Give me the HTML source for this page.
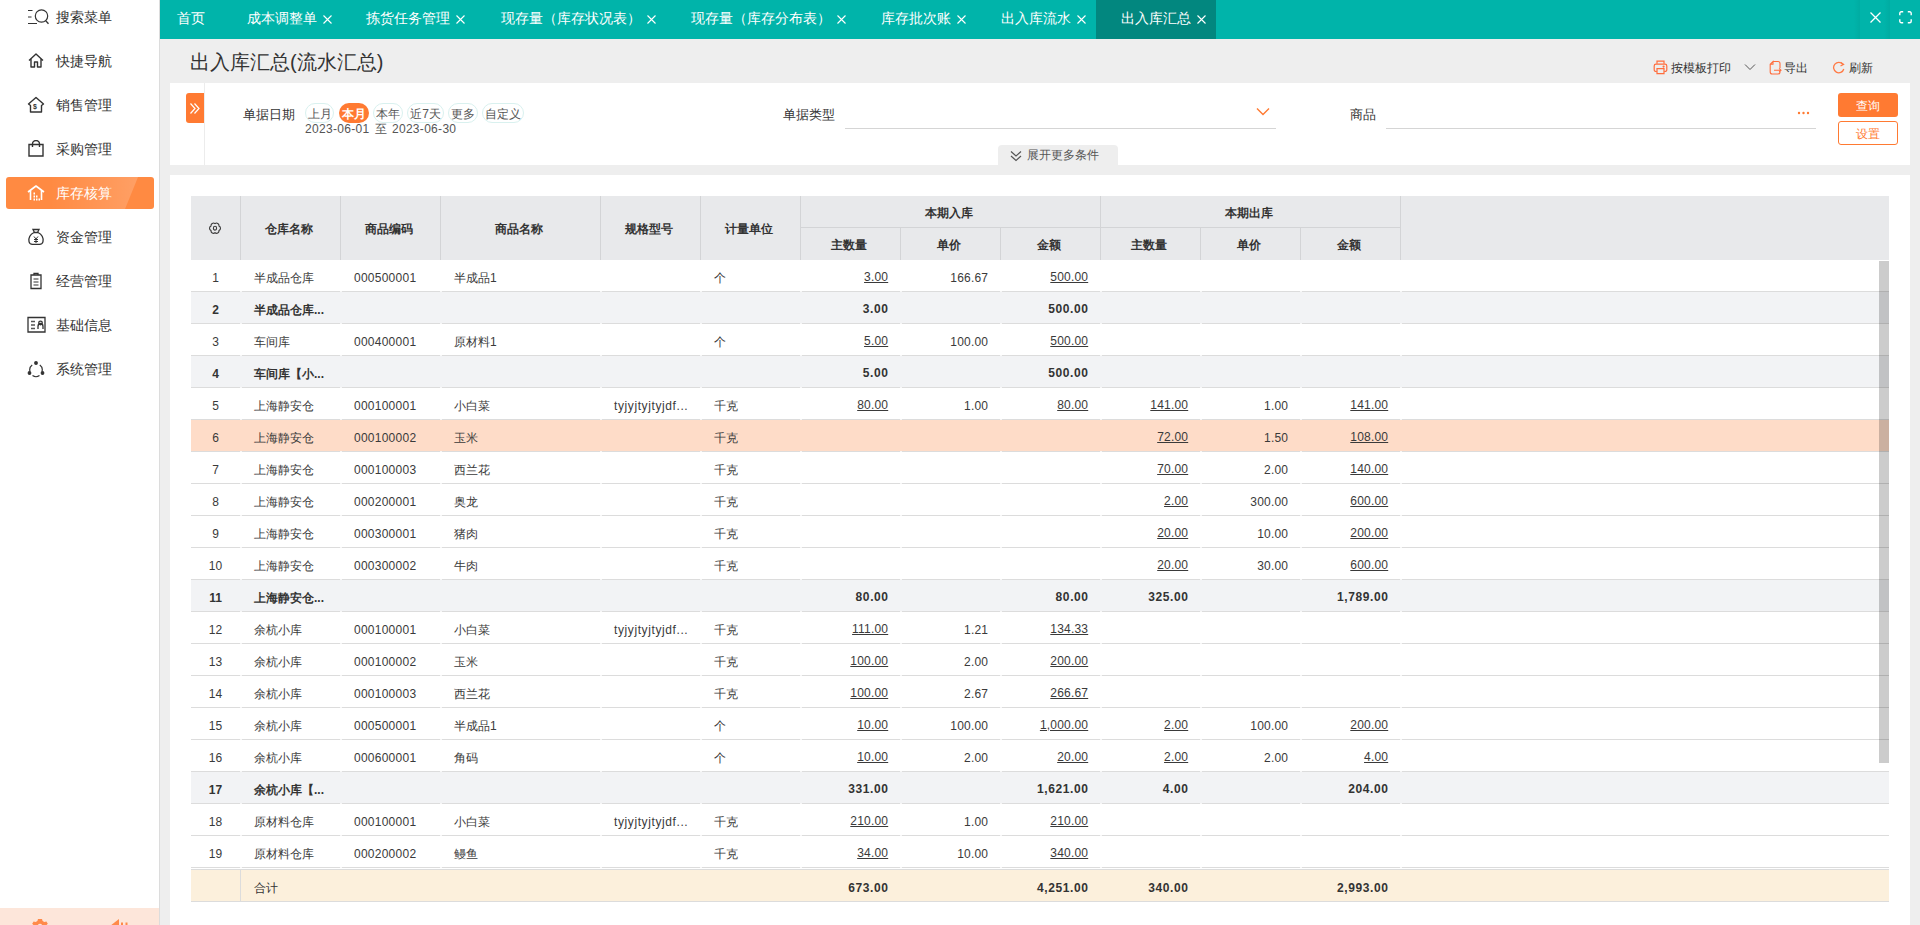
<!DOCTYPE html><html><head><meta charset="utf-8"><style>
*{box-sizing:border-box;margin:0;padding:0}
html,body{width:1920px;height:925px;overflow:hidden}
body{position:relative;background:#eeeeee;font-family:"Liberation Sans",sans-serif;color:#333;font-size:12px}
.a{position:absolute;white-space:nowrap}
.side{position:absolute;left:0;top:0;width:160px;height:925px;background:#fff;border-right:1px solid #dcdcdc}
.mi{position:absolute;left:0;width:159px;height:32px;font-size:14px;line-height:32px;color:#333}
.mi span{position:absolute;left:56px;top:0}
.mi svg{position:absolute;left:26px;top:7px}
.side > svg.a{position:absolute}
.tabs{position:absolute;left:160px;top:0;width:1760px;height:39px;background:#00b4aa}
.tt{position:absolute;top:0;height:39px;line-height:37px;font-size:14px;color:#fff;white-space:nowrap}
.cell{position:absolute;height:31px;line-height:31px;white-space:nowrap}
.hd{position:absolute;background:#e8e9eb;font-weight:bold;color:#333;text-align:center}
.num{text-align:right;padding-right:12px}
.u{text-decoration:underline;text-underline-offset:1px;margin-top:-1px}
</style></head><body>

<div class="side">
<div class="mi" style="top:1px;"><svg width="24" height="18" viewBox="0 0 24 18" fill="none" stroke="#333" stroke-width="1.2"><path d="M2 2.5h4.5M2 9h3.5M2 15.5h9"/><circle cx="15.5" cy="8" r="6.2"/><path d="M19.6 12.6l2.9 3.2" stroke-width="1.4"/></svg><span>搜索菜单</span></div>
<div class="mi" style="top:45px;"><svg width="20" height="18" viewBox="0 0 20 18" fill="none" stroke="#333" stroke-width="1.4" stroke-linejoin="round"><path d="M3 8.5L10 2l7 6.5M5 7v8h3.5v-5h3v5H15V7"/></svg><span>快捷导航</span></div>
<div class="mi" style="top:89px;"><svg width="20" height="18" viewBox="0 0 20 18" fill="none" stroke="#333" stroke-width="1.4" stroke-linejoin="round"><path d="M2.5 8L10 1.5 17.5 8 15.5 9.5V16h-11V9.5z"/><text x="7" y="12.5" font-size="7" font-family="Liberation Sans" font-weight="bold" fill="#333" stroke="none">$</text></svg><span>销售管理</span></div>
<div class="mi" style="top:133px;"><svg width="20" height="18" viewBox="0 0 20 18" fill="none" stroke="#333" stroke-width="1.4"><path d="M3 4.5h14V16H3z"/><path d="M6.5 7V4a3.5 3.5 0 0 1 7 0v3"/></svg><span>采购管理</span></div>
<div class="mi" style="top:177px;left:6px;width:148px;border-radius:3px;background:#ff8a42;color:#fff;overflow:hidden;"><div style="position:absolute;left:0;top:0;width:148px;height:32px;clip-path:polygon(0 0,132px 0,119px 32px,0 32px);background:linear-gradient(to right,rgba(255,255,255,0) 30%,rgba(255,255,255,0.22) 100%)"></div><span style="left:50px">库存核算</span></div>
<svg class="a" style="left:26px;top:184px" width="20" height="18" viewBox="0 0 20 18" fill="none" stroke="#fff" stroke-width="1.6" stroke-linejoin="round"><path d="M2 8L10 2l8 6M4.5 6.5V16M15.5 6.5V16"/><path d="M7.5 9.5h1.5M7.5 12.5h1.5M10 12.5h1.5M7.5 15.5h1.5M10 15.5h1.5M12.5 15.5h1.5" stroke-width="1.8"/></svg>
<div class="mi" style="top:221px;"><svg width="20" height="18" viewBox="0 0 20 18" fill="none" stroke="#333" stroke-width="1.3"><path d="M7 1.5h6l-1.5 3h-3z"/><path d="M8 4.5C4 6.5 2.5 10 3 13.5c.3 1.8 1.5 2.8 3.5 2.8h7c2 0 3.2-1 3.5-2.8.5-3.5-1-7-5-9"/><path d="M8 8.5l2 2.5 2-2.5M10 11v4M8 11.5h4M8 13.5h4" stroke-width="1"/></svg><span>资金管理</span></div>
<div class="mi" style="top:265px;"><svg width="20" height="18" viewBox="0 0 20 18" fill="none" stroke="#333" stroke-width="1.3"><path d="M5 3h10v13.5H5z"/><path d="M8 3V1.5h4V3"/><path d="M7.5 7h5M7.5 10h5M7.5 13h5" stroke="#777"/></svg><span>经营管理</span></div>
<div class="mi" style="top:309px;"><svg width="20" height="18" viewBox="0 0 20 18" fill="none" stroke="#333" stroke-width="1.3"><path d="M2 1.5h17v14.5H2z"/><path d="M5 5.5h4M5 9h4M5 12.5h4" stroke="#555"/><path d="M12 13V10.5a2.5 3 0 0 1 5 0V13M14.5 8.8a1.8 1.8 0 1 0 0-3.6 1.8 1.8 0 0 0 0 3.6z"/></svg><span>基础信息</span></div>
<div class="mi" style="top:353px;"><svg width="20" height="18" viewBox="0 0 20 18" fill="none" stroke="#333" stroke-width="1.2"><path d="M6.2 5A6 6 0 0 0 4 11.5M13.8 5A6 6 0 0 1 16 11.5M6.5 15.5a6 6 0 0 0 7 0"/><circle cx="10" cy="3" r="1.3" fill="#333"/><circle cx="3.5" cy="13" r="1.3" fill="#333"/><circle cx="16.5" cy="13" r="1.3" fill="#333"/></svg><span>系统管理</span></div>
<div class="a" style="left:0;top:908px;width:159px;height:17px;background:#fde6da"></div>
<svg class="a" style="left:32px;top:918px" width="16" height="8"><path d="M6 1h4l.6 2 1.8 1 2-.6 1.4 2.4-1.5 1.5v1.5H1.7V7.3L.2 5.8l1.4-2.4 2 .6 1.8-1z" fill="#ff8a4a"/><circle cx="8" cy="8" r="2.2" fill="#fde6da"/></svg>
<svg class="a" style="left:110px;top:918px" width="20" height="8"><path d="M0 8L9 1v7z" fill="#ff8a4a"/><path d="M12 4.5v4M16.5 4.5v4" stroke="#ff8a4a" stroke-width="2"/></svg>
</div>
<div class="tabs"></div>
<div class="a" style="left:1096px;top:0;width:120px;height:39px;background:#02877f"></div>
<div class="tt" style="left:177px">首页</div>
<div class="tt" style="left:247px">成本调整单</div>
<svg class="a" style="left:323px;top:15px" width="9" height="9"><path d="M0.5 0.5L8.5 8.5M8.5 0.5L0.5 8.5" stroke="#fff" stroke-width="1.1"/></svg>
<div class="tt" style="left:366px">拣货任务管理</div>
<svg class="a" style="left:456px;top:15px" width="9" height="9"><path d="M0.5 0.5L8.5 8.5M8.5 0.5L0.5 8.5" stroke="#fff" stroke-width="1.1"/></svg>
<div class="tt" style="left:501px">现存量（库存状况表）</div>
<svg class="a" style="left:647px;top:15px" width="9" height="9"><path d="M0.5 0.5L8.5 8.5M8.5 0.5L0.5 8.5" stroke="#fff" stroke-width="1.1"/></svg>
<div class="tt" style="left:691px">现存量（库存分布表）</div>
<svg class="a" style="left:837px;top:15px" width="9" height="9"><path d="M0.5 0.5L8.5 8.5M8.5 0.5L0.5 8.5" stroke="#fff" stroke-width="1.1"/></svg>
<div class="tt" style="left:881px">库存批次账</div>
<svg class="a" style="left:957px;top:15px" width="9" height="9"><path d="M0.5 0.5L8.5 8.5M8.5 0.5L0.5 8.5" stroke="#fff" stroke-width="1.1"/></svg>
<div class="tt" style="left:1001px">出入库流水</div>
<svg class="a" style="left:1077px;top:15px" width="9" height="9"><path d="M0.5 0.5L8.5 8.5M8.5 0.5L0.5 8.5" stroke="#fff" stroke-width="1.1"/></svg>
<div class="tt" style="left:1121px">出入库汇总</div>
<svg class="a" style="left:1197px;top:15px" width="9" height="9"><path d="M0.5 0.5L8.5 8.5M8.5 0.5L0.5 8.5" stroke="#fff" stroke-width="1.1"/></svg>
<div class="a" style="left:1854px;top:0;width:6px;height:39px;background:linear-gradient(to right,rgba(0,120,110,0),rgba(0,120,110,0.13))"></div>
<div class="a" style="left:1884px;top:0;width:6px;height:39px;background:linear-gradient(to right,rgba(0,120,110,0),rgba(0,120,110,0.13))"></div>
<svg class="a" style="left:1870px;top:12px" width="11" height="11"><path d="M0.5 0.5L10.5 10.5M10.5 0.5L0.5 10.5" stroke="#fff" stroke-width="1.3"/></svg>
<svg class="a" style="left:1899px;top:11px" width="13" height="13" fill="none" stroke="#fff" stroke-width="1.4"><path d="M.8 4.2V2.3A1.5 1.5 0 0 1 2.3.8h1.9M8.8.8h1.9a1.5 1.5 0 0 1 1.5 1.5v1.9M12.2 8.3v1.9a1.5 1.5 0 0 1-1.5 1.5H8.8M4.2 11.7H2.3A1.5 1.5 0 0 1 .8 10.2V8.3"/></svg>
<div class="a" style="left:190px;top:48px;font-size:20px;line-height:28px;color:#333">出入库汇总(流水汇总)</div>
<svg class="a" style="left:1653px;top:60px" width="15" height="15" fill="none" stroke="#ff6d3d" stroke-width="1.2"><path d="M4 3.8V1.2h7v2.6"/><path d="M3.8 11.5H3A1.8 1.8 0 0 1 1.2 9.7V6A1.8 1.8 0 0 1 3 4.2h9A1.8 1.8 0 0 1 13.8 6v3.7A1.8 1.8 0 0 1 12 11.5h-.8"/><path d="M4 8.6h7v5H4z"/><circle cx="10.6" cy="6.6" r=".5" fill="#ff6d3d"/></svg>
<div class="a" style="left:1671px;top:60px;line-height:16px;font-size:12px;color:#333">按模板打印</div>
<svg class="a" style="left:1744px;top:63px" width="12" height="8" fill="none" stroke="#555" stroke-width="1"><path d="M1 1.5l5 5 5-5"/></svg>
<svg class="a" style="left:1769px;top:60px" width="14" height="15" fill="none" stroke="#ff6d3d" stroke-width="1.1"><path d="M4 1.5h5a2 2 0 0 1 2 2V8M11 11.8v.2a2 2 0 0 1-2 2H3.2a2 2 0 0 1-2-2V4.3L4 1.5v2.8H1.2"/><path d="M5 10.2h7M10.2 8.4l1.8 1.8-1.8 1.8"/></svg>
<div class="a" style="left:1784px;top:60px;line-height:16px;font-size:12px;color:#333">导出</div>
<svg class="a" style="left:1832px;top:61px" width="13" height="13" fill="none" stroke="#ff7a45" stroke-width="1.3"><path d="M11 3.5A5.2 5.2 0 1 0 11.8 8"/><path d="M8.5 1.2l3 2.3-3 1.5" /></svg>
<div class="a" style="left:1849px;top:60px;line-height:16px;font-size:12px;color:#333">刷新</div>
<div class="a" style="left:170px;top:83px;width:1740px;height:82px;background:#fff"></div>
<div class="a" style="left:204px;top:83px;width:1px;height:82px;background:#ececec"></div>
<div class="a" style="left:186px;top:93px;width:18px;height:30px;background:#ff7a32;border-radius:3px 0 0 3px"></div>
<svg class="a" style="left:189px;top:102px" width="13" height="13" fill="none" stroke="#fff" stroke-width="1.2"><path d="M1.5 1.5l4.5 5-4.5 5M5.5 1.5l4.5 5-4.5 5"/></svg>
<div class="a" style="left:243px;top:105px;line-height:20px;font-size:13px;color:#333">单据日期</div>
<div class="a" style="left:305px;top:103px;width:29px;height:20px;border-radius:10px;border:1px solid #d9f1ef;color:#555;text-align:center;line-height:20px;font-size:12px">上月</div>
<div class="a" style="left:339px;top:103px;width:30px;height:20px;border-radius:10px;background:#ff7a32;color:#fff;text-align:center;line-height:22px;font-size:12px;font-weight:bold">本月</div>
<div class="a" style="left:373px;top:103px;width:30px;height:20px;border-radius:10px;border:1px solid #d9f1ef;color:#555;text-align:center;line-height:20px;font-size:12px">本年</div>
<div class="a" style="left:407px;top:103px;width:37px;height:20px;border-radius:10px;border:1px solid #d9f1ef;color:#555;text-align:center;line-height:20px;font-size:12px">近7天</div>
<div class="a" style="left:448px;top:103px;width:30px;height:20px;border-radius:10px;border:1px solid #d9f1ef;color:#555;text-align:center;line-height:20px;font-size:12px">更多</div>
<div class="a" style="left:482px;top:103px;width:42px;height:20px;border-radius:10px;border:1px solid #d9f1ef;color:#555;text-align:center;line-height:20px;font-size:12px">自定义</div>
<div class="a" style="left:305px;top:121px;line-height:16px;font-size:12px;color:#555;letter-spacing:0.3px;word-spacing:1.5px">2023-06-01 至 2023-06-30</div>
<div class="a" style="left:783px;top:105px;line-height:20px;font-size:13px;color:#333">单据类型</div>
<div class="a" style="left:845px;top:128px;width:431px;height:1px;background:#d5d5d5"></div>
<svg class="a" style="left:1256px;top:107px" width="14" height="9" fill="none" stroke="#ff7a32" stroke-width="1.4"><path d="M1 1.5l6 6 6-6"/></svg>
<div class="a" style="left:1350px;top:105px;line-height:20px;font-size:13px;color:#333">商品</div>
<div class="a" style="left:1386px;top:128px;width:430px;height:1px;background:#d5d5d5"></div>
<svg class="a" style="left:1797px;top:111px" width="14" height="4" fill="#ff7a32"><circle cx="2" cy="2" r="1.2"/><circle cx="6.5" cy="2" r="1.2"/><circle cx="11" cy="2" r="1.2"/></svg>
<div class="a" style="left:1838px;top:93px;width:60px;height:24px;background:#ff7a32;border-radius:3px;color:#fff;text-align:center;line-height:26px;font-size:12px">查询</div>
<div class="a" style="left:1838px;top:121px;width:60px;height:24px;border:1px solid #ff7a32;border-radius:3px;color:#ff7a32;text-align:center;line-height:24px;font-size:12px;background:#fff">设置</div>
<div class="a" style="left:998px;top:145px;width:120px;height:20px;background:#eeeeee;border-radius:4px 4px 0 0"></div>
<svg class="a" style="left:1010px;top:150px" width="12" height="12" fill="none" stroke="#555" stroke-width="1.2"><path d="M1 1.5l5 4.5 5-4.5M1 6l5 4.5 5-4.5"/></svg>
<div class="a" style="left:1027px;top:147px;line-height:16px;font-size:12px;color:#555">展开更多条件</div>
<div class="a" style="left:170px;top:175px;width:1740px;height:750px;background:#fff"></div>
<div class="hd" style="left:191px;top:196px;width:1698px;height:64px"></div>
<div class="a" style="left:240px;top:196px;width:1px;height:64px;background:#d3d4d6"></div>
<div class="a" style="left:239px;top:197px;width:100px;height:64px;line-height:64px;text-align:center;font-weight:bold;color:#333">仓库名称</div>
<div class="a" style="left:340px;top:196px;width:1px;height:64px;background:#d3d4d6"></div>
<div class="a" style="left:339px;top:197px;width:100px;height:64px;line-height:64px;text-align:center;font-weight:bold;color:#333">商品编码</div>
<div class="a" style="left:440px;top:196px;width:1px;height:64px;background:#d3d4d6"></div>
<div class="a" style="left:439px;top:197px;width:160px;height:64px;line-height:64px;text-align:center;font-weight:bold;color:#333">商品名称</div>
<div class="a" style="left:600px;top:196px;width:1px;height:64px;background:#d3d4d6"></div>
<div class="a" style="left:599px;top:197px;width:100px;height:64px;line-height:64px;text-align:center;font-weight:bold;color:#333">规格型号</div>
<div class="a" style="left:700px;top:196px;width:1px;height:64px;background:#d3d4d6"></div>
<div class="a" style="left:699px;top:197px;width:100px;height:64px;line-height:64px;text-align:center;font-weight:bold;color:#333">计量单位</div>
<svg class="a" style="left:208px;top:222px" width="15" height="13" fill="none" stroke="#3a3a3a" stroke-width="1.1"><path d="M7.00 1.60A2.5 2.5 0 0 1 10.98 3.90A2.5 2.5 0 0 1 10.98 8.50A2.5 2.5 0 0 1 7.00 10.80A2.5 2.5 0 0 1 3.02 8.50A2.5 2.5 0 0 1 3.02 3.90A2.5 2.5 0 0 1 7.00 1.60Z"/><ellipse cx="7" cy="6.2" rx="1.6" ry="1.9"/></svg>
<div class="a" style="left:800px;top:196px;width:1px;height:64px;background:#d3d4d6"></div>
<div class="a" style="left:799px;top:197px;width:300px;height:32px;line-height:32px;text-align:center;font-weight:bold;color:#333">本期入库</div>
<div class="a" style="left:800px;top:227px;width:300px;height:1px;background:#d3d4d6"></div>
<div class="a" style="left:799px;top:229px;width:100px;height:32px;line-height:32px;text-align:center;font-weight:bold;color:#333">主数量</div>
<div class="a" style="left:900px;top:228px;width:1px;height:32px;background:#d3d4d6"></div>
<div class="a" style="left:899px;top:229px;width:100px;height:32px;line-height:32px;text-align:center;font-weight:bold;color:#333">单价</div>
<div class="a" style="left:1000px;top:228px;width:1px;height:32px;background:#d3d4d6"></div>
<div class="a" style="left:999px;top:229px;width:100px;height:32px;line-height:32px;text-align:center;font-weight:bold;color:#333">金额</div>
<div class="a" style="left:1100px;top:196px;width:1px;height:64px;background:#d3d4d6"></div>
<div class="a" style="left:1099px;top:197px;width:300px;height:32px;line-height:32px;text-align:center;font-weight:bold;color:#333">本期出库</div>
<div class="a" style="left:1100px;top:227px;width:300px;height:1px;background:#d3d4d6"></div>
<div class="a" style="left:1099px;top:229px;width:100px;height:32px;line-height:32px;text-align:center;font-weight:bold;color:#333">主数量</div>
<div class="a" style="left:1200px;top:228px;width:1px;height:32px;background:#d3d4d6"></div>
<div class="a" style="left:1199px;top:229px;width:100px;height:32px;line-height:32px;text-align:center;font-weight:bold;color:#333">单价</div>
<div class="a" style="left:1300px;top:228px;width:1px;height:32px;background:#d3d4d6"></div>
<div class="a" style="left:1299px;top:229px;width:100px;height:32px;line-height:32px;text-align:center;font-weight:bold;color:#333">金额</div>
<div class="a" style="left:1400px;top:196px;width:1px;height:64px;background:#d3d4d6"></div>
<div class="a" style="left:191px;top:291px;width:1698px;height:1px;background:#dcdcdc"></div>
<div class="a" style="left:240px;top:291px;width:2px;height:1px;background:#f6f6f6"></div>
<div class="a" style="left:340px;top:291px;width:2px;height:1px;background:#f6f6f6"></div>
<div class="a" style="left:440px;top:291px;width:2px;height:1px;background:#f6f6f6"></div>
<div class="a" style="left:600px;top:291px;width:2px;height:1px;background:#f6f6f6"></div>
<div class="a" style="left:700px;top:291px;width:2px;height:1px;background:#f6f6f6"></div>
<div class="a" style="left:800px;top:291px;width:2px;height:1px;background:#f6f6f6"></div>
<div class="a" style="left:900px;top:291px;width:2px;height:1px;background:#f6f6f6"></div>
<div class="a" style="left:1000px;top:291px;width:2px;height:1px;background:#f6f6f6"></div>
<div class="a" style="left:1100px;top:291px;width:2px;height:1px;background:#f6f6f6"></div>
<div class="a" style="left:1200px;top:291px;width:2px;height:1px;background:#f6f6f6"></div>
<div class="a" style="left:1300px;top:291px;width:2px;height:1px;background:#f6f6f6"></div>
<div class="a" style="left:1400px;top:291px;width:2px;height:1px;background:#f6f6f6"></div>
<div class="cell" style="left:191px;top:263px;width:49px;text-align:center;color:#3a3a3a;">1</div>
<div class="cell" style="left:240px;top:263px;padding-left:14px;color:#3a3a3a;">半成品仓库</div>
<div class="cell" style="left:340px;top:263px;padding-left:14px;color:#3a3a3a;letter-spacing:0.25px;">000500001</div>
<div class="cell" style="left:440px;top:263px;padding-left:14px;color:#3a3a3a;">半成品1</div>
<div class="cell" style="left:700px;top:263px;padding-left:14px;color:#3a3a3a;">个</div>
<div class="cell num u" style="left:800px;top:263px;width:100px;padding-right:11.8px;letter-spacing:0.2px;color:#3a3a3a;">3.00</div>
<div class="cell num" style="left:900px;top:263px;width:100px;padding-right:11.8px;letter-spacing:0.2px;color:#3a3a3a;">166.67</div>
<div class="cell num u" style="left:1000px;top:263px;width:100px;padding-right:11.8px;letter-spacing:0.2px;color:#3a3a3a;">500.00</div>
<div class="a" style="left:191px;top:292px;width:1698px;height:31px;background:#f2f3f5"></div>
<div class="a" style="left:191px;top:323px;width:1698px;height:1px;background:#dcdcdc"></div>
<div class="a" style="left:240px;top:323px;width:2px;height:1px;background:#f6f6f6"></div>
<div class="a" style="left:340px;top:323px;width:2px;height:1px;background:#f6f6f6"></div>
<div class="a" style="left:440px;top:323px;width:2px;height:1px;background:#f6f6f6"></div>
<div class="a" style="left:600px;top:323px;width:2px;height:1px;background:#f6f6f6"></div>
<div class="a" style="left:700px;top:323px;width:2px;height:1px;background:#f6f6f6"></div>
<div class="a" style="left:800px;top:323px;width:2px;height:1px;background:#f6f6f6"></div>
<div class="a" style="left:900px;top:323px;width:2px;height:1px;background:#f6f6f6"></div>
<div class="a" style="left:1000px;top:323px;width:2px;height:1px;background:#f6f6f6"></div>
<div class="a" style="left:1100px;top:323px;width:2px;height:1px;background:#f6f6f6"></div>
<div class="a" style="left:1200px;top:323px;width:2px;height:1px;background:#f6f6f6"></div>
<div class="a" style="left:1300px;top:323px;width:2px;height:1px;background:#f6f6f6"></div>
<div class="a" style="left:1400px;top:323px;width:2px;height:1px;background:#f6f6f6"></div>
<div class="cell" style="left:191px;top:295px;width:49px;text-align:center;font-weight:bold;color:#333;">2</div>
<div class="cell" style="left:240px;top:295px;padding-left:14px;font-weight:bold;color:#333;">半成品仓库...</div>
<div class="cell num" style="left:800px;top:294px;width:100px;padding-right:11.4px;letter-spacing:0.6px;font-weight:bold;color:#333;">3.00</div>
<div class="cell num" style="left:1000px;top:294px;width:100px;padding-right:11.4px;letter-spacing:0.6px;font-weight:bold;color:#333;">500.00</div>
<div class="a" style="left:191px;top:355px;width:1698px;height:1px;background:#dcdcdc"></div>
<div class="a" style="left:240px;top:355px;width:2px;height:1px;background:#f6f6f6"></div>
<div class="a" style="left:340px;top:355px;width:2px;height:1px;background:#f6f6f6"></div>
<div class="a" style="left:440px;top:355px;width:2px;height:1px;background:#f6f6f6"></div>
<div class="a" style="left:600px;top:355px;width:2px;height:1px;background:#f6f6f6"></div>
<div class="a" style="left:700px;top:355px;width:2px;height:1px;background:#f6f6f6"></div>
<div class="a" style="left:800px;top:355px;width:2px;height:1px;background:#f6f6f6"></div>
<div class="a" style="left:900px;top:355px;width:2px;height:1px;background:#f6f6f6"></div>
<div class="a" style="left:1000px;top:355px;width:2px;height:1px;background:#f6f6f6"></div>
<div class="a" style="left:1100px;top:355px;width:2px;height:1px;background:#f6f6f6"></div>
<div class="a" style="left:1200px;top:355px;width:2px;height:1px;background:#f6f6f6"></div>
<div class="a" style="left:1300px;top:355px;width:2px;height:1px;background:#f6f6f6"></div>
<div class="a" style="left:1400px;top:355px;width:2px;height:1px;background:#f6f6f6"></div>
<div class="cell" style="left:191px;top:327px;width:49px;text-align:center;color:#3a3a3a;">3</div>
<div class="cell" style="left:240px;top:327px;padding-left:14px;color:#3a3a3a;">车间库</div>
<div class="cell" style="left:340px;top:327px;padding-left:14px;color:#3a3a3a;letter-spacing:0.25px;">000400001</div>
<div class="cell" style="left:440px;top:327px;padding-left:14px;color:#3a3a3a;">原材料1</div>
<div class="cell" style="left:700px;top:327px;padding-left:14px;color:#3a3a3a;">个</div>
<div class="cell num u" style="left:800px;top:327px;width:100px;padding-right:11.8px;letter-spacing:0.2px;color:#3a3a3a;">5.00</div>
<div class="cell num" style="left:900px;top:327px;width:100px;padding-right:11.8px;letter-spacing:0.2px;color:#3a3a3a;">100.00</div>
<div class="cell num u" style="left:1000px;top:327px;width:100px;padding-right:11.8px;letter-spacing:0.2px;color:#3a3a3a;">500.00</div>
<div class="a" style="left:191px;top:356px;width:1698px;height:31px;background:#f2f3f5"></div>
<div class="a" style="left:191px;top:387px;width:1698px;height:1px;background:#dcdcdc"></div>
<div class="a" style="left:240px;top:387px;width:2px;height:1px;background:#f6f6f6"></div>
<div class="a" style="left:340px;top:387px;width:2px;height:1px;background:#f6f6f6"></div>
<div class="a" style="left:440px;top:387px;width:2px;height:1px;background:#f6f6f6"></div>
<div class="a" style="left:600px;top:387px;width:2px;height:1px;background:#f6f6f6"></div>
<div class="a" style="left:700px;top:387px;width:2px;height:1px;background:#f6f6f6"></div>
<div class="a" style="left:800px;top:387px;width:2px;height:1px;background:#f6f6f6"></div>
<div class="a" style="left:900px;top:387px;width:2px;height:1px;background:#f6f6f6"></div>
<div class="a" style="left:1000px;top:387px;width:2px;height:1px;background:#f6f6f6"></div>
<div class="a" style="left:1100px;top:387px;width:2px;height:1px;background:#f6f6f6"></div>
<div class="a" style="left:1200px;top:387px;width:2px;height:1px;background:#f6f6f6"></div>
<div class="a" style="left:1300px;top:387px;width:2px;height:1px;background:#f6f6f6"></div>
<div class="a" style="left:1400px;top:387px;width:2px;height:1px;background:#f6f6f6"></div>
<div class="cell" style="left:191px;top:359px;width:49px;text-align:center;font-weight:bold;color:#333;">4</div>
<div class="cell" style="left:240px;top:359px;padding-left:14px;font-weight:bold;color:#333;">车间库【小...</div>
<div class="cell num" style="left:800px;top:358px;width:100px;padding-right:11.4px;letter-spacing:0.6px;font-weight:bold;color:#333;">5.00</div>
<div class="cell num" style="left:1000px;top:358px;width:100px;padding-right:11.4px;letter-spacing:0.6px;font-weight:bold;color:#333;">500.00</div>
<div class="a" style="left:191px;top:419px;width:1698px;height:1px;background:#dcdcdc"></div>
<div class="a" style="left:240px;top:419px;width:2px;height:1px;background:#f6f6f6"></div>
<div class="a" style="left:340px;top:419px;width:2px;height:1px;background:#f6f6f6"></div>
<div class="a" style="left:440px;top:419px;width:2px;height:1px;background:#f6f6f6"></div>
<div class="a" style="left:600px;top:419px;width:2px;height:1px;background:#f6f6f6"></div>
<div class="a" style="left:700px;top:419px;width:2px;height:1px;background:#f6f6f6"></div>
<div class="a" style="left:800px;top:419px;width:2px;height:1px;background:#f6f6f6"></div>
<div class="a" style="left:900px;top:419px;width:2px;height:1px;background:#f6f6f6"></div>
<div class="a" style="left:1000px;top:419px;width:2px;height:1px;background:#f6f6f6"></div>
<div class="a" style="left:1100px;top:419px;width:2px;height:1px;background:#f6f6f6"></div>
<div class="a" style="left:1200px;top:419px;width:2px;height:1px;background:#f6f6f6"></div>
<div class="a" style="left:1300px;top:419px;width:2px;height:1px;background:#f6f6f6"></div>
<div class="a" style="left:1400px;top:419px;width:2px;height:1px;background:#f6f6f6"></div>
<div class="cell" style="left:191px;top:391px;width:49px;text-align:center;color:#3a3a3a;">5</div>
<div class="cell" style="left:240px;top:391px;padding-left:14px;color:#3a3a3a;">上海静安仓</div>
<div class="cell" style="left:340px;top:391px;padding-left:14px;color:#3a3a3a;letter-spacing:0.25px;">000100001</div>
<div class="cell" style="left:440px;top:391px;padding-left:14px;color:#3a3a3a;">小白菜</div>
<div class="cell" style="left:600px;top:391px;padding-left:14px;color:#3a3a3a;letter-spacing:0.6px;">tyjyjtyjtyjdf...</div>
<div class="cell" style="left:700px;top:391px;padding-left:14px;color:#3a3a3a;">千克</div>
<div class="cell num u" style="left:800px;top:391px;width:100px;padding-right:11.8px;letter-spacing:0.2px;color:#3a3a3a;">80.00</div>
<div class="cell num" style="left:900px;top:391px;width:100px;padding-right:11.8px;letter-spacing:0.2px;color:#3a3a3a;">1.00</div>
<div class="cell num u" style="left:1000px;top:391px;width:100px;padding-right:11.8px;letter-spacing:0.2px;color:#3a3a3a;">80.00</div>
<div class="cell num u" style="left:1100px;top:391px;width:100px;padding-right:11.8px;letter-spacing:0.2px;color:#3a3a3a;">141.00</div>
<div class="cell num" style="left:1200px;top:391px;width:100px;padding-right:11.8px;letter-spacing:0.2px;color:#3a3a3a;">1.00</div>
<div class="cell num u" style="left:1300px;top:391px;width:100px;padding-right:11.8px;letter-spacing:0.2px;color:#3a3a3a;">141.00</div>
<div class="a" style="left:191px;top:420px;width:1698px;height:31px;background:#fedcc8"></div>
<div class="a" style="left:191px;top:451px;width:1698px;height:1px;background:#dcdcdc"></div>
<div class="a" style="left:240px;top:451px;width:2px;height:1px;background:#f6f6f6"></div>
<div class="a" style="left:340px;top:451px;width:2px;height:1px;background:#f6f6f6"></div>
<div class="a" style="left:440px;top:451px;width:2px;height:1px;background:#f6f6f6"></div>
<div class="a" style="left:600px;top:451px;width:2px;height:1px;background:#f6f6f6"></div>
<div class="a" style="left:700px;top:451px;width:2px;height:1px;background:#f6f6f6"></div>
<div class="a" style="left:800px;top:451px;width:2px;height:1px;background:#f6f6f6"></div>
<div class="a" style="left:900px;top:451px;width:2px;height:1px;background:#f6f6f6"></div>
<div class="a" style="left:1000px;top:451px;width:2px;height:1px;background:#f6f6f6"></div>
<div class="a" style="left:1100px;top:451px;width:2px;height:1px;background:#f6f6f6"></div>
<div class="a" style="left:1200px;top:451px;width:2px;height:1px;background:#f6f6f6"></div>
<div class="a" style="left:1300px;top:451px;width:2px;height:1px;background:#f6f6f6"></div>
<div class="a" style="left:1400px;top:451px;width:2px;height:1px;background:#f6f6f6"></div>
<div class="cell" style="left:191px;top:423px;width:49px;text-align:center;color:#3a3a3a;">6</div>
<div class="cell" style="left:240px;top:423px;padding-left:14px;color:#3a3a3a;">上海静安仓</div>
<div class="cell" style="left:340px;top:423px;padding-left:14px;color:#3a3a3a;letter-spacing:0.25px;">000100002</div>
<div class="cell" style="left:440px;top:423px;padding-left:14px;color:#3a3a3a;">玉米</div>
<div class="cell" style="left:700px;top:423px;padding-left:14px;color:#3a3a3a;">千克</div>
<div class="cell num u" style="left:1100px;top:423px;width:100px;padding-right:11.8px;letter-spacing:0.2px;color:#3a3a3a;">72.00</div>
<div class="cell num" style="left:1200px;top:423px;width:100px;padding-right:11.8px;letter-spacing:0.2px;color:#3a3a3a;">1.50</div>
<div class="cell num u" style="left:1300px;top:423px;width:100px;padding-right:11.8px;letter-spacing:0.2px;color:#3a3a3a;">108.00</div>
<div class="a" style="left:191px;top:483px;width:1698px;height:1px;background:#dcdcdc"></div>
<div class="a" style="left:240px;top:483px;width:2px;height:1px;background:#f6f6f6"></div>
<div class="a" style="left:340px;top:483px;width:2px;height:1px;background:#f6f6f6"></div>
<div class="a" style="left:440px;top:483px;width:2px;height:1px;background:#f6f6f6"></div>
<div class="a" style="left:600px;top:483px;width:2px;height:1px;background:#f6f6f6"></div>
<div class="a" style="left:700px;top:483px;width:2px;height:1px;background:#f6f6f6"></div>
<div class="a" style="left:800px;top:483px;width:2px;height:1px;background:#f6f6f6"></div>
<div class="a" style="left:900px;top:483px;width:2px;height:1px;background:#f6f6f6"></div>
<div class="a" style="left:1000px;top:483px;width:2px;height:1px;background:#f6f6f6"></div>
<div class="a" style="left:1100px;top:483px;width:2px;height:1px;background:#f6f6f6"></div>
<div class="a" style="left:1200px;top:483px;width:2px;height:1px;background:#f6f6f6"></div>
<div class="a" style="left:1300px;top:483px;width:2px;height:1px;background:#f6f6f6"></div>
<div class="a" style="left:1400px;top:483px;width:2px;height:1px;background:#f6f6f6"></div>
<div class="cell" style="left:191px;top:455px;width:49px;text-align:center;color:#3a3a3a;">7</div>
<div class="cell" style="left:240px;top:455px;padding-left:14px;color:#3a3a3a;">上海静安仓</div>
<div class="cell" style="left:340px;top:455px;padding-left:14px;color:#3a3a3a;letter-spacing:0.25px;">000100003</div>
<div class="cell" style="left:440px;top:455px;padding-left:14px;color:#3a3a3a;">西兰花</div>
<div class="cell" style="left:700px;top:455px;padding-left:14px;color:#3a3a3a;">千克</div>
<div class="cell num u" style="left:1100px;top:455px;width:100px;padding-right:11.8px;letter-spacing:0.2px;color:#3a3a3a;">70.00</div>
<div class="cell num" style="left:1200px;top:455px;width:100px;padding-right:11.8px;letter-spacing:0.2px;color:#3a3a3a;">2.00</div>
<div class="cell num u" style="left:1300px;top:455px;width:100px;padding-right:11.8px;letter-spacing:0.2px;color:#3a3a3a;">140.00</div>
<div class="a" style="left:191px;top:515px;width:1698px;height:1px;background:#dcdcdc"></div>
<div class="a" style="left:240px;top:515px;width:2px;height:1px;background:#f6f6f6"></div>
<div class="a" style="left:340px;top:515px;width:2px;height:1px;background:#f6f6f6"></div>
<div class="a" style="left:440px;top:515px;width:2px;height:1px;background:#f6f6f6"></div>
<div class="a" style="left:600px;top:515px;width:2px;height:1px;background:#f6f6f6"></div>
<div class="a" style="left:700px;top:515px;width:2px;height:1px;background:#f6f6f6"></div>
<div class="a" style="left:800px;top:515px;width:2px;height:1px;background:#f6f6f6"></div>
<div class="a" style="left:900px;top:515px;width:2px;height:1px;background:#f6f6f6"></div>
<div class="a" style="left:1000px;top:515px;width:2px;height:1px;background:#f6f6f6"></div>
<div class="a" style="left:1100px;top:515px;width:2px;height:1px;background:#f6f6f6"></div>
<div class="a" style="left:1200px;top:515px;width:2px;height:1px;background:#f6f6f6"></div>
<div class="a" style="left:1300px;top:515px;width:2px;height:1px;background:#f6f6f6"></div>
<div class="a" style="left:1400px;top:515px;width:2px;height:1px;background:#f6f6f6"></div>
<div class="cell" style="left:191px;top:487px;width:49px;text-align:center;color:#3a3a3a;">8</div>
<div class="cell" style="left:240px;top:487px;padding-left:14px;color:#3a3a3a;">上海静安仓</div>
<div class="cell" style="left:340px;top:487px;padding-left:14px;color:#3a3a3a;letter-spacing:0.25px;">000200001</div>
<div class="cell" style="left:440px;top:487px;padding-left:14px;color:#3a3a3a;">奥龙</div>
<div class="cell" style="left:700px;top:487px;padding-left:14px;color:#3a3a3a;">千克</div>
<div class="cell num u" style="left:1100px;top:487px;width:100px;padding-right:11.8px;letter-spacing:0.2px;color:#3a3a3a;">2.00</div>
<div class="cell num" style="left:1200px;top:487px;width:100px;padding-right:11.8px;letter-spacing:0.2px;color:#3a3a3a;">300.00</div>
<div class="cell num u" style="left:1300px;top:487px;width:100px;padding-right:11.8px;letter-spacing:0.2px;color:#3a3a3a;">600.00</div>
<div class="a" style="left:191px;top:547px;width:1698px;height:1px;background:#dcdcdc"></div>
<div class="a" style="left:240px;top:547px;width:2px;height:1px;background:#f6f6f6"></div>
<div class="a" style="left:340px;top:547px;width:2px;height:1px;background:#f6f6f6"></div>
<div class="a" style="left:440px;top:547px;width:2px;height:1px;background:#f6f6f6"></div>
<div class="a" style="left:600px;top:547px;width:2px;height:1px;background:#f6f6f6"></div>
<div class="a" style="left:700px;top:547px;width:2px;height:1px;background:#f6f6f6"></div>
<div class="a" style="left:800px;top:547px;width:2px;height:1px;background:#f6f6f6"></div>
<div class="a" style="left:900px;top:547px;width:2px;height:1px;background:#f6f6f6"></div>
<div class="a" style="left:1000px;top:547px;width:2px;height:1px;background:#f6f6f6"></div>
<div class="a" style="left:1100px;top:547px;width:2px;height:1px;background:#f6f6f6"></div>
<div class="a" style="left:1200px;top:547px;width:2px;height:1px;background:#f6f6f6"></div>
<div class="a" style="left:1300px;top:547px;width:2px;height:1px;background:#f6f6f6"></div>
<div class="a" style="left:1400px;top:547px;width:2px;height:1px;background:#f6f6f6"></div>
<div class="cell" style="left:191px;top:519px;width:49px;text-align:center;color:#3a3a3a;">9</div>
<div class="cell" style="left:240px;top:519px;padding-left:14px;color:#3a3a3a;">上海静安仓</div>
<div class="cell" style="left:340px;top:519px;padding-left:14px;color:#3a3a3a;letter-spacing:0.25px;">000300001</div>
<div class="cell" style="left:440px;top:519px;padding-left:14px;color:#3a3a3a;">猪肉</div>
<div class="cell" style="left:700px;top:519px;padding-left:14px;color:#3a3a3a;">千克</div>
<div class="cell num u" style="left:1100px;top:519px;width:100px;padding-right:11.8px;letter-spacing:0.2px;color:#3a3a3a;">20.00</div>
<div class="cell num" style="left:1200px;top:519px;width:100px;padding-right:11.8px;letter-spacing:0.2px;color:#3a3a3a;">10.00</div>
<div class="cell num u" style="left:1300px;top:519px;width:100px;padding-right:11.8px;letter-spacing:0.2px;color:#3a3a3a;">200.00</div>
<div class="a" style="left:191px;top:579px;width:1698px;height:1px;background:#dcdcdc"></div>
<div class="a" style="left:240px;top:579px;width:2px;height:1px;background:#f6f6f6"></div>
<div class="a" style="left:340px;top:579px;width:2px;height:1px;background:#f6f6f6"></div>
<div class="a" style="left:440px;top:579px;width:2px;height:1px;background:#f6f6f6"></div>
<div class="a" style="left:600px;top:579px;width:2px;height:1px;background:#f6f6f6"></div>
<div class="a" style="left:700px;top:579px;width:2px;height:1px;background:#f6f6f6"></div>
<div class="a" style="left:800px;top:579px;width:2px;height:1px;background:#f6f6f6"></div>
<div class="a" style="left:900px;top:579px;width:2px;height:1px;background:#f6f6f6"></div>
<div class="a" style="left:1000px;top:579px;width:2px;height:1px;background:#f6f6f6"></div>
<div class="a" style="left:1100px;top:579px;width:2px;height:1px;background:#f6f6f6"></div>
<div class="a" style="left:1200px;top:579px;width:2px;height:1px;background:#f6f6f6"></div>
<div class="a" style="left:1300px;top:579px;width:2px;height:1px;background:#f6f6f6"></div>
<div class="a" style="left:1400px;top:579px;width:2px;height:1px;background:#f6f6f6"></div>
<div class="cell" style="left:191px;top:551px;width:49px;text-align:center;color:#3a3a3a;">10</div>
<div class="cell" style="left:240px;top:551px;padding-left:14px;color:#3a3a3a;">上海静安仓</div>
<div class="cell" style="left:340px;top:551px;padding-left:14px;color:#3a3a3a;letter-spacing:0.25px;">000300002</div>
<div class="cell" style="left:440px;top:551px;padding-left:14px;color:#3a3a3a;">牛肉</div>
<div class="cell" style="left:700px;top:551px;padding-left:14px;color:#3a3a3a;">千克</div>
<div class="cell num u" style="left:1100px;top:551px;width:100px;padding-right:11.8px;letter-spacing:0.2px;color:#3a3a3a;">20.00</div>
<div class="cell num" style="left:1200px;top:551px;width:100px;padding-right:11.8px;letter-spacing:0.2px;color:#3a3a3a;">30.00</div>
<div class="cell num u" style="left:1300px;top:551px;width:100px;padding-right:11.8px;letter-spacing:0.2px;color:#3a3a3a;">600.00</div>
<div class="a" style="left:191px;top:580px;width:1698px;height:31px;background:#f2f3f5"></div>
<div class="a" style="left:191px;top:611px;width:1698px;height:1px;background:#dcdcdc"></div>
<div class="a" style="left:240px;top:611px;width:2px;height:1px;background:#f6f6f6"></div>
<div class="a" style="left:340px;top:611px;width:2px;height:1px;background:#f6f6f6"></div>
<div class="a" style="left:440px;top:611px;width:2px;height:1px;background:#f6f6f6"></div>
<div class="a" style="left:600px;top:611px;width:2px;height:1px;background:#f6f6f6"></div>
<div class="a" style="left:700px;top:611px;width:2px;height:1px;background:#f6f6f6"></div>
<div class="a" style="left:800px;top:611px;width:2px;height:1px;background:#f6f6f6"></div>
<div class="a" style="left:900px;top:611px;width:2px;height:1px;background:#f6f6f6"></div>
<div class="a" style="left:1000px;top:611px;width:2px;height:1px;background:#f6f6f6"></div>
<div class="a" style="left:1100px;top:611px;width:2px;height:1px;background:#f6f6f6"></div>
<div class="a" style="left:1200px;top:611px;width:2px;height:1px;background:#f6f6f6"></div>
<div class="a" style="left:1300px;top:611px;width:2px;height:1px;background:#f6f6f6"></div>
<div class="a" style="left:1400px;top:611px;width:2px;height:1px;background:#f6f6f6"></div>
<div class="cell" style="left:191px;top:583px;width:49px;text-align:center;font-weight:bold;color:#333;">11</div>
<div class="cell" style="left:240px;top:583px;padding-left:14px;font-weight:bold;color:#333;">上海静安仓...</div>
<div class="cell num" style="left:800px;top:582px;width:100px;padding-right:11.4px;letter-spacing:0.6px;font-weight:bold;color:#333;">80.00</div>
<div class="cell num" style="left:1000px;top:582px;width:100px;padding-right:11.4px;letter-spacing:0.6px;font-weight:bold;color:#333;">80.00</div>
<div class="cell num" style="left:1100px;top:582px;width:100px;padding-right:11.4px;letter-spacing:0.6px;font-weight:bold;color:#333;">325.00</div>
<div class="cell num" style="left:1300px;top:582px;width:100px;padding-right:11.4px;letter-spacing:0.6px;font-weight:bold;color:#333;">1,789.00</div>
<div class="a" style="left:191px;top:643px;width:1698px;height:1px;background:#dcdcdc"></div>
<div class="a" style="left:240px;top:643px;width:2px;height:1px;background:#f6f6f6"></div>
<div class="a" style="left:340px;top:643px;width:2px;height:1px;background:#f6f6f6"></div>
<div class="a" style="left:440px;top:643px;width:2px;height:1px;background:#f6f6f6"></div>
<div class="a" style="left:600px;top:643px;width:2px;height:1px;background:#f6f6f6"></div>
<div class="a" style="left:700px;top:643px;width:2px;height:1px;background:#f6f6f6"></div>
<div class="a" style="left:800px;top:643px;width:2px;height:1px;background:#f6f6f6"></div>
<div class="a" style="left:900px;top:643px;width:2px;height:1px;background:#f6f6f6"></div>
<div class="a" style="left:1000px;top:643px;width:2px;height:1px;background:#f6f6f6"></div>
<div class="a" style="left:1100px;top:643px;width:2px;height:1px;background:#f6f6f6"></div>
<div class="a" style="left:1200px;top:643px;width:2px;height:1px;background:#f6f6f6"></div>
<div class="a" style="left:1300px;top:643px;width:2px;height:1px;background:#f6f6f6"></div>
<div class="a" style="left:1400px;top:643px;width:2px;height:1px;background:#f6f6f6"></div>
<div class="cell" style="left:191px;top:615px;width:49px;text-align:center;color:#3a3a3a;">12</div>
<div class="cell" style="left:240px;top:615px;padding-left:14px;color:#3a3a3a;">余杭小库</div>
<div class="cell" style="left:340px;top:615px;padding-left:14px;color:#3a3a3a;letter-spacing:0.25px;">000100001</div>
<div class="cell" style="left:440px;top:615px;padding-left:14px;color:#3a3a3a;">小白菜</div>
<div class="cell" style="left:600px;top:615px;padding-left:14px;color:#3a3a3a;letter-spacing:0.6px;">tyjyjtyjtyjdf...</div>
<div class="cell" style="left:700px;top:615px;padding-left:14px;color:#3a3a3a;">千克</div>
<div class="cell num u" style="left:800px;top:615px;width:100px;padding-right:11.8px;letter-spacing:0.2px;color:#3a3a3a;">111.00</div>
<div class="cell num" style="left:900px;top:615px;width:100px;padding-right:11.8px;letter-spacing:0.2px;color:#3a3a3a;">1.21</div>
<div class="cell num u" style="left:1000px;top:615px;width:100px;padding-right:11.8px;letter-spacing:0.2px;color:#3a3a3a;">134.33</div>
<div class="a" style="left:191px;top:675px;width:1698px;height:1px;background:#dcdcdc"></div>
<div class="a" style="left:240px;top:675px;width:2px;height:1px;background:#f6f6f6"></div>
<div class="a" style="left:340px;top:675px;width:2px;height:1px;background:#f6f6f6"></div>
<div class="a" style="left:440px;top:675px;width:2px;height:1px;background:#f6f6f6"></div>
<div class="a" style="left:600px;top:675px;width:2px;height:1px;background:#f6f6f6"></div>
<div class="a" style="left:700px;top:675px;width:2px;height:1px;background:#f6f6f6"></div>
<div class="a" style="left:800px;top:675px;width:2px;height:1px;background:#f6f6f6"></div>
<div class="a" style="left:900px;top:675px;width:2px;height:1px;background:#f6f6f6"></div>
<div class="a" style="left:1000px;top:675px;width:2px;height:1px;background:#f6f6f6"></div>
<div class="a" style="left:1100px;top:675px;width:2px;height:1px;background:#f6f6f6"></div>
<div class="a" style="left:1200px;top:675px;width:2px;height:1px;background:#f6f6f6"></div>
<div class="a" style="left:1300px;top:675px;width:2px;height:1px;background:#f6f6f6"></div>
<div class="a" style="left:1400px;top:675px;width:2px;height:1px;background:#f6f6f6"></div>
<div class="cell" style="left:191px;top:647px;width:49px;text-align:center;color:#3a3a3a;">13</div>
<div class="cell" style="left:240px;top:647px;padding-left:14px;color:#3a3a3a;">余杭小库</div>
<div class="cell" style="left:340px;top:647px;padding-left:14px;color:#3a3a3a;letter-spacing:0.25px;">000100002</div>
<div class="cell" style="left:440px;top:647px;padding-left:14px;color:#3a3a3a;">玉米</div>
<div class="cell" style="left:700px;top:647px;padding-left:14px;color:#3a3a3a;">千克</div>
<div class="cell num u" style="left:800px;top:647px;width:100px;padding-right:11.8px;letter-spacing:0.2px;color:#3a3a3a;">100.00</div>
<div class="cell num" style="left:900px;top:647px;width:100px;padding-right:11.8px;letter-spacing:0.2px;color:#3a3a3a;">2.00</div>
<div class="cell num u" style="left:1000px;top:647px;width:100px;padding-right:11.8px;letter-spacing:0.2px;color:#3a3a3a;">200.00</div>
<div class="a" style="left:191px;top:707px;width:1698px;height:1px;background:#dcdcdc"></div>
<div class="a" style="left:240px;top:707px;width:2px;height:1px;background:#f6f6f6"></div>
<div class="a" style="left:340px;top:707px;width:2px;height:1px;background:#f6f6f6"></div>
<div class="a" style="left:440px;top:707px;width:2px;height:1px;background:#f6f6f6"></div>
<div class="a" style="left:600px;top:707px;width:2px;height:1px;background:#f6f6f6"></div>
<div class="a" style="left:700px;top:707px;width:2px;height:1px;background:#f6f6f6"></div>
<div class="a" style="left:800px;top:707px;width:2px;height:1px;background:#f6f6f6"></div>
<div class="a" style="left:900px;top:707px;width:2px;height:1px;background:#f6f6f6"></div>
<div class="a" style="left:1000px;top:707px;width:2px;height:1px;background:#f6f6f6"></div>
<div class="a" style="left:1100px;top:707px;width:2px;height:1px;background:#f6f6f6"></div>
<div class="a" style="left:1200px;top:707px;width:2px;height:1px;background:#f6f6f6"></div>
<div class="a" style="left:1300px;top:707px;width:2px;height:1px;background:#f6f6f6"></div>
<div class="a" style="left:1400px;top:707px;width:2px;height:1px;background:#f6f6f6"></div>
<div class="cell" style="left:191px;top:679px;width:49px;text-align:center;color:#3a3a3a;">14</div>
<div class="cell" style="left:240px;top:679px;padding-left:14px;color:#3a3a3a;">余杭小库</div>
<div class="cell" style="left:340px;top:679px;padding-left:14px;color:#3a3a3a;letter-spacing:0.25px;">000100003</div>
<div class="cell" style="left:440px;top:679px;padding-left:14px;color:#3a3a3a;">西兰花</div>
<div class="cell" style="left:700px;top:679px;padding-left:14px;color:#3a3a3a;">千克</div>
<div class="cell num u" style="left:800px;top:679px;width:100px;padding-right:11.8px;letter-spacing:0.2px;color:#3a3a3a;">100.00</div>
<div class="cell num" style="left:900px;top:679px;width:100px;padding-right:11.8px;letter-spacing:0.2px;color:#3a3a3a;">2.67</div>
<div class="cell num u" style="left:1000px;top:679px;width:100px;padding-right:11.8px;letter-spacing:0.2px;color:#3a3a3a;">266.67</div>
<div class="a" style="left:191px;top:739px;width:1698px;height:1px;background:#dcdcdc"></div>
<div class="a" style="left:240px;top:739px;width:2px;height:1px;background:#f6f6f6"></div>
<div class="a" style="left:340px;top:739px;width:2px;height:1px;background:#f6f6f6"></div>
<div class="a" style="left:440px;top:739px;width:2px;height:1px;background:#f6f6f6"></div>
<div class="a" style="left:600px;top:739px;width:2px;height:1px;background:#f6f6f6"></div>
<div class="a" style="left:700px;top:739px;width:2px;height:1px;background:#f6f6f6"></div>
<div class="a" style="left:800px;top:739px;width:2px;height:1px;background:#f6f6f6"></div>
<div class="a" style="left:900px;top:739px;width:2px;height:1px;background:#f6f6f6"></div>
<div class="a" style="left:1000px;top:739px;width:2px;height:1px;background:#f6f6f6"></div>
<div class="a" style="left:1100px;top:739px;width:2px;height:1px;background:#f6f6f6"></div>
<div class="a" style="left:1200px;top:739px;width:2px;height:1px;background:#f6f6f6"></div>
<div class="a" style="left:1300px;top:739px;width:2px;height:1px;background:#f6f6f6"></div>
<div class="a" style="left:1400px;top:739px;width:2px;height:1px;background:#f6f6f6"></div>
<div class="cell" style="left:191px;top:711px;width:49px;text-align:center;color:#3a3a3a;">15</div>
<div class="cell" style="left:240px;top:711px;padding-left:14px;color:#3a3a3a;">余杭小库</div>
<div class="cell" style="left:340px;top:711px;padding-left:14px;color:#3a3a3a;letter-spacing:0.25px;">000500001</div>
<div class="cell" style="left:440px;top:711px;padding-left:14px;color:#3a3a3a;">半成品1</div>
<div class="cell" style="left:700px;top:711px;padding-left:14px;color:#3a3a3a;">个</div>
<div class="cell num u" style="left:800px;top:711px;width:100px;padding-right:11.8px;letter-spacing:0.2px;color:#3a3a3a;">10.00</div>
<div class="cell num" style="left:900px;top:711px;width:100px;padding-right:11.8px;letter-spacing:0.2px;color:#3a3a3a;">100.00</div>
<div class="cell num u" style="left:1000px;top:711px;width:100px;padding-right:11.8px;letter-spacing:0.2px;color:#3a3a3a;">1,000.00</div>
<div class="cell num u" style="left:1100px;top:711px;width:100px;padding-right:11.8px;letter-spacing:0.2px;color:#3a3a3a;">2.00</div>
<div class="cell num" style="left:1200px;top:711px;width:100px;padding-right:11.8px;letter-spacing:0.2px;color:#3a3a3a;">100.00</div>
<div class="cell num u" style="left:1300px;top:711px;width:100px;padding-right:11.8px;letter-spacing:0.2px;color:#3a3a3a;">200.00</div>
<div class="a" style="left:191px;top:771px;width:1698px;height:1px;background:#dcdcdc"></div>
<div class="a" style="left:240px;top:771px;width:2px;height:1px;background:#f6f6f6"></div>
<div class="a" style="left:340px;top:771px;width:2px;height:1px;background:#f6f6f6"></div>
<div class="a" style="left:440px;top:771px;width:2px;height:1px;background:#f6f6f6"></div>
<div class="a" style="left:600px;top:771px;width:2px;height:1px;background:#f6f6f6"></div>
<div class="a" style="left:700px;top:771px;width:2px;height:1px;background:#f6f6f6"></div>
<div class="a" style="left:800px;top:771px;width:2px;height:1px;background:#f6f6f6"></div>
<div class="a" style="left:900px;top:771px;width:2px;height:1px;background:#f6f6f6"></div>
<div class="a" style="left:1000px;top:771px;width:2px;height:1px;background:#f6f6f6"></div>
<div class="a" style="left:1100px;top:771px;width:2px;height:1px;background:#f6f6f6"></div>
<div class="a" style="left:1200px;top:771px;width:2px;height:1px;background:#f6f6f6"></div>
<div class="a" style="left:1300px;top:771px;width:2px;height:1px;background:#f6f6f6"></div>
<div class="a" style="left:1400px;top:771px;width:2px;height:1px;background:#f6f6f6"></div>
<div class="cell" style="left:191px;top:743px;width:49px;text-align:center;color:#3a3a3a;">16</div>
<div class="cell" style="left:240px;top:743px;padding-left:14px;color:#3a3a3a;">余杭小库</div>
<div class="cell" style="left:340px;top:743px;padding-left:14px;color:#3a3a3a;letter-spacing:0.25px;">000600001</div>
<div class="cell" style="left:440px;top:743px;padding-left:14px;color:#3a3a3a;">角码</div>
<div class="cell" style="left:700px;top:743px;padding-left:14px;color:#3a3a3a;">个</div>
<div class="cell num u" style="left:800px;top:743px;width:100px;padding-right:11.8px;letter-spacing:0.2px;color:#3a3a3a;">10.00</div>
<div class="cell num" style="left:900px;top:743px;width:100px;padding-right:11.8px;letter-spacing:0.2px;color:#3a3a3a;">2.00</div>
<div class="cell num u" style="left:1000px;top:743px;width:100px;padding-right:11.8px;letter-spacing:0.2px;color:#3a3a3a;">20.00</div>
<div class="cell num u" style="left:1100px;top:743px;width:100px;padding-right:11.8px;letter-spacing:0.2px;color:#3a3a3a;">2.00</div>
<div class="cell num" style="left:1200px;top:743px;width:100px;padding-right:11.8px;letter-spacing:0.2px;color:#3a3a3a;">2.00</div>
<div class="cell num u" style="left:1300px;top:743px;width:100px;padding-right:11.8px;letter-spacing:0.2px;color:#3a3a3a;">4.00</div>
<div class="a" style="left:191px;top:772px;width:1698px;height:31px;background:#f2f3f5"></div>
<div class="a" style="left:191px;top:803px;width:1698px;height:1px;background:#dcdcdc"></div>
<div class="a" style="left:240px;top:803px;width:2px;height:1px;background:#f6f6f6"></div>
<div class="a" style="left:340px;top:803px;width:2px;height:1px;background:#f6f6f6"></div>
<div class="a" style="left:440px;top:803px;width:2px;height:1px;background:#f6f6f6"></div>
<div class="a" style="left:600px;top:803px;width:2px;height:1px;background:#f6f6f6"></div>
<div class="a" style="left:700px;top:803px;width:2px;height:1px;background:#f6f6f6"></div>
<div class="a" style="left:800px;top:803px;width:2px;height:1px;background:#f6f6f6"></div>
<div class="a" style="left:900px;top:803px;width:2px;height:1px;background:#f6f6f6"></div>
<div class="a" style="left:1000px;top:803px;width:2px;height:1px;background:#f6f6f6"></div>
<div class="a" style="left:1100px;top:803px;width:2px;height:1px;background:#f6f6f6"></div>
<div class="a" style="left:1200px;top:803px;width:2px;height:1px;background:#f6f6f6"></div>
<div class="a" style="left:1300px;top:803px;width:2px;height:1px;background:#f6f6f6"></div>
<div class="a" style="left:1400px;top:803px;width:2px;height:1px;background:#f6f6f6"></div>
<div class="cell" style="left:191px;top:775px;width:49px;text-align:center;font-weight:bold;color:#333;">17</div>
<div class="cell" style="left:240px;top:775px;padding-left:14px;font-weight:bold;color:#333;">余杭小库【...</div>
<div class="cell num" style="left:800px;top:774px;width:100px;padding-right:11.4px;letter-spacing:0.6px;font-weight:bold;color:#333;">331.00</div>
<div class="cell num" style="left:1000px;top:774px;width:100px;padding-right:11.4px;letter-spacing:0.6px;font-weight:bold;color:#333;">1,621.00</div>
<div class="cell num" style="left:1100px;top:774px;width:100px;padding-right:11.4px;letter-spacing:0.6px;font-weight:bold;color:#333;">4.00</div>
<div class="cell num" style="left:1300px;top:774px;width:100px;padding-right:11.4px;letter-spacing:0.6px;font-weight:bold;color:#333;">204.00</div>
<div class="a" style="left:191px;top:835px;width:1698px;height:1px;background:#dcdcdc"></div>
<div class="a" style="left:240px;top:835px;width:2px;height:1px;background:#f6f6f6"></div>
<div class="a" style="left:340px;top:835px;width:2px;height:1px;background:#f6f6f6"></div>
<div class="a" style="left:440px;top:835px;width:2px;height:1px;background:#f6f6f6"></div>
<div class="a" style="left:600px;top:835px;width:2px;height:1px;background:#f6f6f6"></div>
<div class="a" style="left:700px;top:835px;width:2px;height:1px;background:#f6f6f6"></div>
<div class="a" style="left:800px;top:835px;width:2px;height:1px;background:#f6f6f6"></div>
<div class="a" style="left:900px;top:835px;width:2px;height:1px;background:#f6f6f6"></div>
<div class="a" style="left:1000px;top:835px;width:2px;height:1px;background:#f6f6f6"></div>
<div class="a" style="left:1100px;top:835px;width:2px;height:1px;background:#f6f6f6"></div>
<div class="a" style="left:1200px;top:835px;width:2px;height:1px;background:#f6f6f6"></div>
<div class="a" style="left:1300px;top:835px;width:2px;height:1px;background:#f6f6f6"></div>
<div class="a" style="left:1400px;top:835px;width:2px;height:1px;background:#f6f6f6"></div>
<div class="cell" style="left:191px;top:807px;width:49px;text-align:center;color:#3a3a3a;">18</div>
<div class="cell" style="left:240px;top:807px;padding-left:14px;color:#3a3a3a;">原材料仓库</div>
<div class="cell" style="left:340px;top:807px;padding-left:14px;color:#3a3a3a;letter-spacing:0.25px;">000100001</div>
<div class="cell" style="left:440px;top:807px;padding-left:14px;color:#3a3a3a;">小白菜</div>
<div class="cell" style="left:600px;top:807px;padding-left:14px;color:#3a3a3a;letter-spacing:0.6px;">tyjyjtyjtyjdf...</div>
<div class="cell" style="left:700px;top:807px;padding-left:14px;color:#3a3a3a;">千克</div>
<div class="cell num u" style="left:800px;top:807px;width:100px;padding-right:11.8px;letter-spacing:0.2px;color:#3a3a3a;">210.00</div>
<div class="cell num" style="left:900px;top:807px;width:100px;padding-right:11.8px;letter-spacing:0.2px;color:#3a3a3a;">1.00</div>
<div class="cell num u" style="left:1000px;top:807px;width:100px;padding-right:11.8px;letter-spacing:0.2px;color:#3a3a3a;">210.00</div>
<div class="a" style="left:191px;top:867px;width:1698px;height:1px;background:#dcdcdc"></div>
<div class="a" style="left:240px;top:867px;width:2px;height:1px;background:#f6f6f6"></div>
<div class="a" style="left:340px;top:867px;width:2px;height:1px;background:#f6f6f6"></div>
<div class="a" style="left:440px;top:867px;width:2px;height:1px;background:#f6f6f6"></div>
<div class="a" style="left:600px;top:867px;width:2px;height:1px;background:#f6f6f6"></div>
<div class="a" style="left:700px;top:867px;width:2px;height:1px;background:#f6f6f6"></div>
<div class="a" style="left:800px;top:867px;width:2px;height:1px;background:#f6f6f6"></div>
<div class="a" style="left:900px;top:867px;width:2px;height:1px;background:#f6f6f6"></div>
<div class="a" style="left:1000px;top:867px;width:2px;height:1px;background:#f6f6f6"></div>
<div class="a" style="left:1100px;top:867px;width:2px;height:1px;background:#f6f6f6"></div>
<div class="a" style="left:1200px;top:867px;width:2px;height:1px;background:#f6f6f6"></div>
<div class="a" style="left:1300px;top:867px;width:2px;height:1px;background:#f6f6f6"></div>
<div class="a" style="left:1400px;top:867px;width:2px;height:1px;background:#f6f6f6"></div>
<div class="cell" style="left:191px;top:839px;width:49px;text-align:center;color:#3a3a3a;">19</div>
<div class="cell" style="left:240px;top:839px;padding-left:14px;color:#3a3a3a;">原材料仓库</div>
<div class="cell" style="left:340px;top:839px;padding-left:14px;color:#3a3a3a;letter-spacing:0.25px;">000200002</div>
<div class="cell" style="left:440px;top:839px;padding-left:14px;color:#3a3a3a;">鳗鱼</div>
<div class="cell" style="left:700px;top:839px;padding-left:14px;color:#3a3a3a;">千克</div>
<div class="cell num u" style="left:800px;top:839px;width:100px;padding-right:11.8px;letter-spacing:0.2px;color:#3a3a3a;">34.00</div>
<div class="cell num" style="left:900px;top:839px;width:100px;padding-right:11.8px;letter-spacing:0.2px;color:#3a3a3a;">10.00</div>
<div class="cell num u" style="left:1000px;top:839px;width:100px;padding-right:11.8px;letter-spacing:0.2px;color:#3a3a3a;">340.00</div>
<div class="a" style="left:191px;top:869px;width:1698px;height:1px;background:#dcdcdc"></div>
<div class="a" style="left:191px;top:870px;width:1698px;height:31px;background:#fcf0dc"></div>
<div class="a" style="left:191px;top:901px;width:1698px;height:1px;background:#dcdcdc"></div>
<div class="a" style="left:240px;top:870px;width:1px;height:31px;background:#dcdcdc"></div>
<div class="cell" style="left:240px;top:873px;padding-left:14px;color:#333">合计</div>
<div class="cell num" style="left:800px;top:873px;width:100px;padding-right:11.4px;letter-spacing:0.6px;font-weight:bold;color:#333">673.00</div>
<div class="cell num" style="left:1000px;top:873px;width:100px;padding-right:11.4px;letter-spacing:0.6px;font-weight:bold;color:#333">4,251.00</div>
<div class="cell num" style="left:1100px;top:873px;width:100px;padding-right:11.4px;letter-spacing:0.6px;font-weight:bold;color:#333">340.00</div>
<div class="cell num" style="left:1300px;top:873px;width:100px;padding-right:11.4px;letter-spacing:0.6px;font-weight:bold;color:#333">2,993.00</div>
<div class="a" style="left:1879px;top:261px;width:10px;height:502px;background:rgba(0,0,0,0.2)"></div>
</body></html>
